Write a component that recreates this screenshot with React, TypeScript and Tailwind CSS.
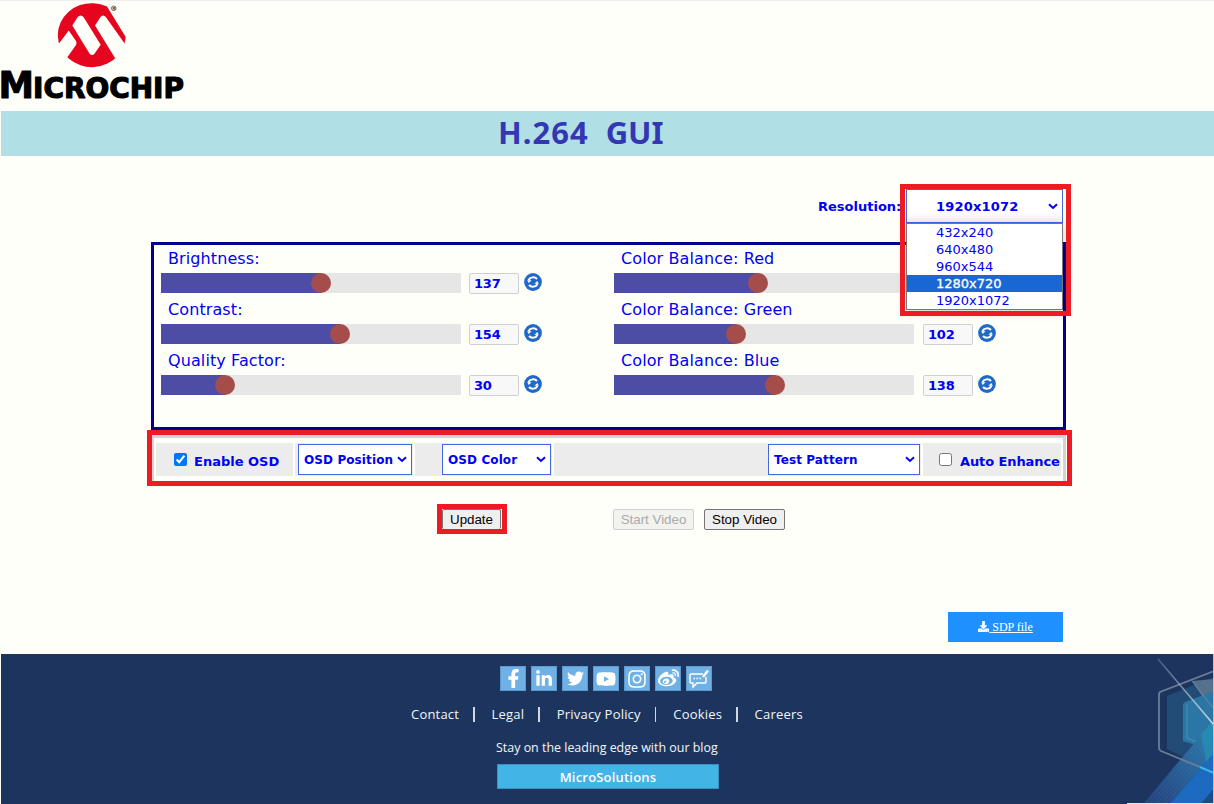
import React from "react";
import { FaFacebookF, FaLinkedinIn, FaTwitter, FaYoutube, FaInstagram, FaWeibo, FaDownload } from "react-icons/fa";

const verdana = "font-['DejaVu_Sans',sans-serif]";

function Logo() {
  return (
    <svg width="200" height="110" viewBox="0 1 200 110" className="block">
      <path d="M107 6.500 A34 32 0 1 0 124.500 44 L125.700 37 Z" fill="#e5051f" />
      <path d="M95 25.500 L100.500 17 Q103 14 105.800 17 L125 44 L126 54 L115 58 Z" fill="#fffffa" />
      <path d="M72.300 25.500 L77.700 17 Q80.500 14 83.500 17 L100.700 44.700 L94.500 53.700 Q92 56.500 89.500 53.500 Z" fill="#fffffa" />
      <path d="M59 43.500 L68.700 30.500 L76 41 Q77 43 76 45 L67.500 57 L60 60 L56 45 Z" fill="#fffffa" />
      <circle cx="113.700" cy="8.300" r="2.300" fill="none" stroke="#333" strokeWidth=".7" />
      <text x="112.400" y="9.900" fontSize="4" fontWeight="700" fontFamily="Liberation Sans, sans-serif" fill="#222">R</text>
      <text x="-1.500" y="98" fontSize="38" fontWeight="700" fontFamily="DejaVu Sans, sans-serif" textLength="35.500" lengthAdjust="spacingAndGlyphs" stroke="#000" strokeWidth="1" strokeLinejoin="round">M</text>
      <text x="33" y="98" fontSize="29" fontWeight="700" fontFamily="DejaVu Sans, sans-serif" textLength="151" lengthAdjust="spacingAndGlyphs" stroke="#000" strokeWidth="1.200" strokeLinejoin="round">ICROCHIP</text>
    </svg>
  );
}

function Refresh() {
  return (
    <svg width="18" height="18" viewBox="0 0 18 18" className="ml-[5px] shrink-0">
      <circle cx="9" cy="9" r="8.900" fill="#2069c9" />
      <path d="M4.500 7.200 A5 4.600 0 0 1 13 6 M13.500 10.800 A5 4.600 0 0 1 5 12" fill="none" stroke="#fff" strokeWidth="2" />
      <path d="M14.800 10.800 H10.400 L13.300 8 Z M3.200 7.200 H7.600 L4.700 10 Z" fill="#fff" />
    </svg>
  );
}

function Slider({ label, fill, value, gap = "w-[8px]" }: { label: string; fill: number; value?: string; gap?: string }) {
  return (
    <div className="h-[51px]">
      <div className="h-[28px] pl-[7px] pt-[2px] text-[16px] leading-[24px] tracking-[0.1px] text-[#0000f5]">{label}</div>
      <div className="flex h-[21px]">
        <div className="h-5 w-[300px] shrink-0 bg-[#e6e6e6]">
          <div className="flex h-5 justify-end" style={{ width: fill + 10, background: `linear-gradient(to right,#4d4da5 ${fill}px,transparent ${fill}px)` }}>
            <span className="size-5 rounded-full bg-[#a54d4a]" />
          </div>
        </div>
        {value && (
          <>
            <span className={gap} />
            <div className="h-[21px] w-[50px] rounded-[2px] border border-[#d0d0d0] bg-[#f8f8f8] pl-1 text-[13px] font-bold leading-[20px] tracking-[-0.2px] text-[#0000f5]">{value}</div>
            <Refresh />
          </>
        )}
      </div>
    </div>
  );
}

function Chevron() {
  return (
    <svg width="10" height="7" viewBox="0 0 10 7" className="shrink-0">
      <path d="M1 1.300 L5 5 L9 1.300" fill="none" stroke="#0000f5" strokeWidth="2" />
    </svg>
  );
}

function Select({ text, className }: { text: string; className: string }) {
  return (
    <div className={"flex h-[31px] shrink-0 items-center justify-between border border-[#4169e1] bg-white pl-[5px] pr-[4px] text-[12px] font-bold tracking-[0.1px] text-[#0000f5] " + className}>
      <span className="whitespace-nowrap">{text}</span>
      <Chevron />
    </div>
  );
}

function Social({ children }: { children: React.ReactNode }) {
  return <div className="flex h-[25px] w-[26px] items-center justify-center border border-[#5b9bd0] bg-[#70b1e5] text-white">{children}</div>;
}

function FooterArt() {
  return (
    <svg width="88" height="150" viewBox="0 0 88 150" className="absolute right-0 top-0">
      <defs>
        <linearGradient id="ray" x1="0" y1="1" x2="1" y2="0">
          <stop offset="0" stopColor="#253d78" />
          <stop offset="1" stopColor="#2d83b0" />
        </linearGradient>
        <linearGradient id="line" x1="0" y1="0" x2="1" y2="1">
          <stop offset="0" stopColor="#8ea3be" stopOpacity=".4" />
          <stop offset="1" stopColor="#cbdbe8" />
        </linearGradient>
        <pattern id="hatch" width="3" height="3" patternUnits="userSpaceOnUse" patternTransform="rotate(42)">
          <rect width="1" height="3" fill="#3a78c8" opacity=".25" />
        </pattern>
      </defs>
      <path d="M41 42 L88 23 V118 L41 95 Z" fill="#224b75" />
      <path d="M66 27 L88 25 V60 Z" fill="#56718d" />
      <path d="M59 48 L88 37 V97 L57 87 V50 Z" fill="#2b76a4" />
      <path d="M61 50 V84 L88 95" fill="none" stroke="#3a8dae" strokeWidth="1.500" />
      <path d="M17 150 L88 66 V99 L44 150 Z" fill="url(#ray)" />
      <path d="M44 150 L88 99 V135 L75 150 Z" fill="#1a69c0" />
      <path d="M75 150 L88 135 V150 Z" fill="#174c86" />
      <path d="M75 80 L88 66 V99 L80 108 Z" fill="#219ab8" opacity=".55" />
      <path d="M17 150 L88 66 V135 L75 150 Z" fill="url(#hatch)" />
      <path d="M88 17 L34 38 Q33 39 33 41 V94 Q33 96 35 97 L74 113" fill="none" stroke="#6d7d99" strokeWidth="1.800" />
      <path d="M74 113 L88 119" stroke="#35b8ee" strokeWidth="2" />
      <path d="M32 5 L88 71" stroke="url(#line)" strokeWidth="1.500" />
      <path d="M66 27 L88 55" stroke="#73869f" strokeWidth="1" />
      <path d="M87.500 0 V150" stroke="#b8c1ce" />
      <path d="M1 149.500 H88" stroke="#e4e8ec" />
    </svg>
  );
}

export default function App() {
  const link = "shrink-0 whitespace-nowrap";
  const bar = "ml-[14px] mr-[17px] h-[15px] w-[1.5px] shrink-0 bg-[#cfd8e2]";
  return (
    <div className={"relative flex h-[804px] w-[1214px] flex-col overflow-hidden bg-[#fffffa] " + verdana}>
      <header className="h-[111px] shrink-0 border-t border-[#efefef]"><Logo /></header>
      <h1 className="ml-px flex h-[45px] shrink-0 items-center gap-[17px] bg-[#b0e0e6] pb-[2px] pl-[497px] font-['Noto_Sans',sans-serif] text-[31px] font-bold leading-none text-[#3437b4]">
        <span className="tracking-[1px]">H.264</span><span>GUI</span>
      </h1>

      <div className="relative mt-[33px] flex h-[34px] shrink-0 pl-[818px] text-[13px] font-bold text-[#0000f5]">
        <span className="w-[88px] shrink-0 whitespace-nowrap pt-[9px] leading-[18px]">Resolution:</span>
        <div className="flex h-[34px] w-[157px] items-center justify-between border border-[#4169e1] bg-linear-to-b from-white from-65% to-[#f4f4f8] pl-[29px] pr-[4px]">
          <span className="pt-[2px] tracking-[0.2px]">1920x1072</span><Chevron />
        </div>
        <div className="absolute left-[906px] top-[34px] z-10 h-[87px] w-[157px] border border-[#767676] bg-white font-normal shadow-[0_2px_10px_rgba(0,0,0,0.2)]">
          {["432x240", "640x480", "960x544", "1280x720", "1920x1072"].map((o) => (
            <div key={o} className={"h-[17px] pl-[29px] leading-[17px] " + (o === "1280x720" ? "bg-[#1967d2] text-white [-webkit-text-stroke:0.3px_white]" : "")}>{o}</div>
          ))}
        </div>
        <div className="absolute left-[900px] top-[-5px] z-20 h-[132px] w-[171px] border-[5px] border-[#ed1c24]" />
      </div>

      <section className="ml-[151px] mt-[19px] flex h-[188px] w-[915px] shrink-0 border-[3px] border-[#00008b] pl-[7px]">
        <div className="w-[453px] shrink-0">
          <Slider label="Brightness:" fill={160} value="137" />
          <Slider label="Contrast:" fill={179} value="154" />
          <Slider label="Quality Factor:" fill={64} value="30" />
        </div>
        <div>
          <Slider label="Color Balance: Red" fill={144} />
          <Slider label="Color Balance: Green" fill={122} value="102" gap="w-[9px]" />
          <Slider label="Color Balance: Blue" fill={161} value="138" gap="w-[9px]" />
        </div>
      </section>

      <section className="ml-[147px] flex h-[56px] w-[925px] shrink-0 border-[5px] border-[#ed1c24] pr-px">
        <div className="flex w-full gap-[2px] border-x-[3px] border-t-[3px] border-[#d3d3d3] border-l-2 px-[2px] pt-[5px] text-[13px] font-bold text-[#0000f5]">
          <label className="flex h-[33px] w-[137px] shrink-0 bg-[#ececec] pl-[18px]">
            <input type="checkbox" defaultChecked className="mt-[10px] size-[13px]" />
            <span className="ml-[7px] whitespace-nowrap pt-[10px] leading-[18px]">Enable OSD</span>
          </label>
          <div className="flex h-[33px] w-[118px] shrink-0 bg-[#ececec] py-px pl-[3px]"><Select text="OSD Position" className="w-[114px]" /></div>
          <div className="flex h-[33px] w-[137px] shrink-0 bg-[#ececec] py-px pl-[27px]"><Select text="OSD Color" className="w-[109px]" /></div>
          <div className="flex h-[33px] w-[367px] shrink-0 bg-[#ececec] py-px pl-[214px]"><Select text="Test Pattern" className="w-[152px]" /></div>
          <label className="flex h-[33px] w-[138px] shrink-0 bg-[#ececec] pl-[16px]">
            <input type="checkbox" className="mt-[10px] size-[13px]" />
            <span className="ml-[8px] whitespace-nowrap pt-[10px] leading-[18px] tracking-[-0.1px]">Auto Enhance</span>
          </label>
        </div>
      </section>

      <div className="mt-[18px] flex h-[30px] shrink-0 pl-[437px] font-['Liberation_Sans',sans-serif] text-[13.33px] text-black">
        <div className="h-[30px] w-[70px] border-[5px] border-[#ed1c24]">
          <button className="block h-5 w-[59px] rounded-[2px] border border-b-0 border-[#767676] bg-[#efefef] leading-[20px]">Update</button>
        </div>
        <button className="ml-[106px] mt-[5px] h-[21px] w-[81px] whitespace-nowrap rounded-[2px] border border-[#d0d0ce] bg-[#f2f2ee] leading-[19px] text-[#aaaaaa]">Start Video</button>
        <button className="ml-[10px] mt-[5px] h-[21px] w-[81px] whitespace-nowrap rounded-[2px] border border-[#767676] bg-[#efefef] leading-[19px]">Stop Video</button>
      </div>

      <a className="ml-[948px] mt-[78px] flex h-[30px] w-[115px] shrink-0 items-center justify-center bg-[#1e90ff] font-['Liberation_Serif',serif] text-[12px] text-white">
        <FaDownload size={11} className="mb-[2px]" /><span className="whitespace-pre underline"> SDP file</span>
      </a>

      <footer className="relative ml-px mt-[12px] h-[150px] shrink-0 bg-[#1d355e] font-['Open_Sans',sans-serif] text-[13px] text-[#f2f5f8]">
        <FooterArt />
        <div className="flex gap-[5px] pl-[499.400px] pt-[12.400px]">
          <Social><FaFacebookF size={19} /></Social>
          <Social><FaLinkedinIn size={18} /></Social>
          <Social><FaTwitter size={17} /></Social>
          <Social><FaYoutube size={20} /></Social>
          <Social><FaInstagram size={20} /></Social>
          <Social><FaWeibo size={21} /></Social>
          <Social>
            <svg width="22" height="20" viewBox="0 0 22 20" fill="none" stroke="white" strokeWidth="1.400">
              <path d="M15 5 H3 Q2 5 2 6 V13 Q2 14 3 14 H5 V18 L9 14 H17 Q18 14 18 13 V8" />
              <path d="M20 1.500 L15 8" strokeWidth="2.400" />
              <path d="M5.500 9.500 H7 M8.500 9.500 H10 M11.500 9.500 H13" />
            </svg>
          </Social>
        </div>
        <div className="flex h-[45.600px] items-center pl-[410px] pt-px font-medium tracking-[0.2px]">
          <span className={link}>Contact</span><i className={bar} /><span className={link}>Legal</span><i className={bar} /><span className={link}>Privacy Policy</span><i className={bar} /><span className={link}>Cookies</span><i className={bar} /><span className={link}>Careers</span>
        </div>
        <div className="pl-[495px] text-[12.450px] leading-[22px]">Stay on the leading edge with our blog</div>
        <div className="ml-[496px] mt-[5px] flex h-[25px] w-[222px] items-center justify-center border border-[#3b91bf] bg-[#42b4e6] pt-[2px] text-[13px] font-semibold tracking-[0.2px] text-white">MicroSolutions</div>
      </footer>
    </div>
  );
}
